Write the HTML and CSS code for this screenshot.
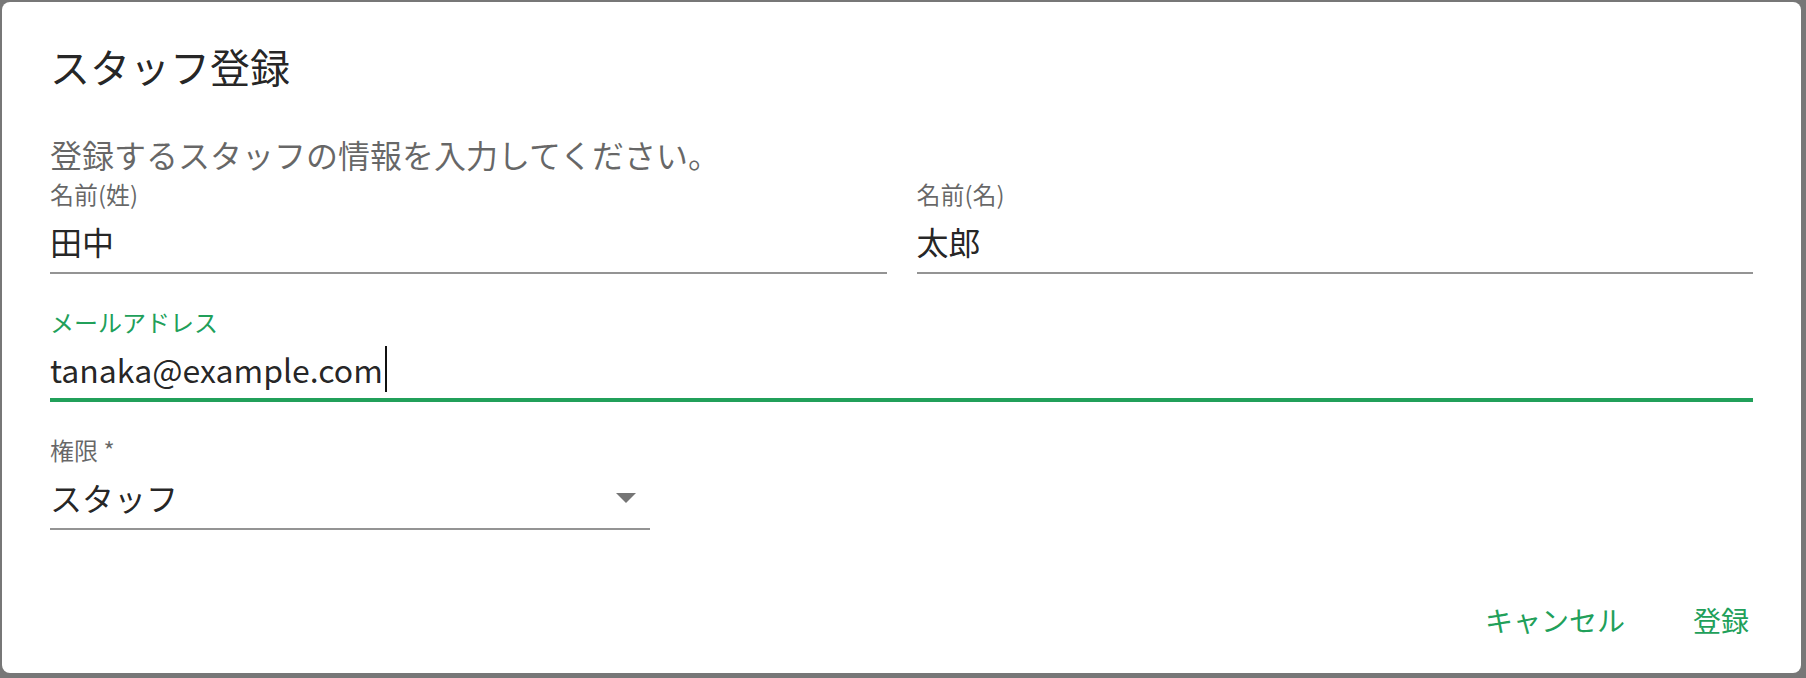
FILE: index.html
```html
<!DOCTYPE html>
<html lang="ja">
<head>
    <meta charset="UTF-8">
    <meta name="viewport" content="width=device-width, initial-scale=1.0">
    <title>スタッフ登録</title>
    <link rel="stylesheet" href="styles.css">
</head>
<body>
    <div class="dialog">
        <h2 class="dialog-title">スタッフ登録</h2>

        <div class="dialog-content">
            <p class="dialog-text">登録するスタッフの情報を入力してください。</p>

            <div class="row">
                <div class="field">
                    <label class="field-label">名前(姓)</label>
                    <div class="field-input">田中</div>
                </div>
                <div class="field">
                    <label class="field-label">名前(名)</label>
                    <div class="field-input">太郎</div>
                </div>
            </div>

            <div class="field spaced focused">
                <label class="field-label">メールアドレス</label>
                <div class="field-input">tanaka@example.com<span class="caret"></span></div>
            </div>

            <div class="field spaced select">
                <label class="field-label">権限 *</label>
                <div class="field-input">
                    <span>スタッフ</span>
                    <svg class="arrow" width="48" height="48" viewBox="0 0 24 24"><path d="M7 10l5 5 5-5z"/></svg>
                </div>
            </div>
        </div>

        <div class="dialog-actions">
            <button type="button">キャンセル</button>
            <button type="submit">登録</button>
        </div>
    </div>
</body>
</html>
```

FILE: styles.css
```css
body { margin: 0; background: #777; height: 678px; overflow: hidden; font-family: "Noto Sans CJK JP", "Noto Sans", sans-serif; }
.dialog { margin: 2px 0 0 2px; width: 1799px; height: 671px; background: #fff; border-radius: 8px; display: flex; flex-direction: column; box-sizing: border-box; }
.dialog-title { margin: 0; padding: 32px 48px; font-size: 40px; line-height: 64px; font-weight: 400; color: rgba(0, 0, 0, 0.87); }
.dialog-content { flex: 1; padding: 0 48px; }
.dialog-text { margin: 0; font-size: 32px; line-height: 48px; color: rgba(0, 0, 0, 0.6); }
.row { display: grid; grid-template-columns: 1fr 1fr; gap: 30px; }
.field.spaced { margin-top: 32px; }
.field-label { display: block; height: 32px; font-size: 24px; line-height: 32px; color: rgba(0, 0, 0, 0.6); }
.field-input { padding: 8px 0; font-size: 32px; line-height: 46px; color: rgba(0, 0, 0, 0.87); border-bottom: 2px solid #949494; }
.focused .field-label { color: #21a05a; }
.focused .field-input { padding-bottom: 6px; border-bottom: 4px solid #21a05a; }
.caret { display: inline-block; width: 2px; height: 46px; margin-left: 2px; background: #111; vertical-align: top; }
.select { width: 600px; }
.select .field-input { display: flex; justify-content: space-between; align-items: center; }
.arrow { margin: -1px 0; fill: rgba(0, 0, 0, 0.54); }
.dialog-actions { display: flex; justify-content: flex-end; gap: 16px; padding: 16px; }
.dialog-actions button { min-width: 128px; padding: 12px 16px; border: none; background: none; font-family: inherit; font-size: 28px; line-height: 49px; font-weight: 400; color: #21a05a; cursor: pointer; }
```
